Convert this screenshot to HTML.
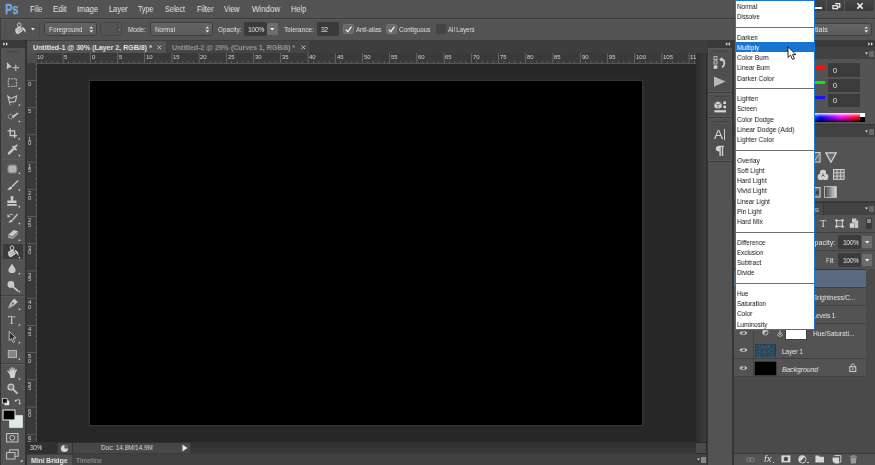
<!DOCTYPE html>
<html><head><meta charset="utf-8"><title>Photoshop</title>
<style>
html,body{margin:0;padding:0;}
body{width:875px;height:465px;position:relative;overflow:hidden;background:#535353;font-family:"Liberation Sans",sans-serif;}
body>div,body>svg{position:absolute;display:block;}
.r{white-space:nowrap;text-align:right;transform:rotate(-90deg);will-change:transform;}
.t{white-space:nowrap;transform-origin:0 50%;will-change:transform;}
</style></head><body>
<div style="left:27px;top:53px;width:681px;height:401px;background:#272727;"></div>
<div style="left:90px;top:81px;width:552.2px;height:344.3px;background:#000;outline:1px solid #343434;box-shadow:0 0 0 2px #2b2b2b;"></div>
<div style="left:27px;top:53px;width:669px;height:10px;background:#3a3a3a;"></div>
<div style="left:27px;top:53px;width:10px;height:389px;background:#3a3a3a;"></div>
<div style="left:27px;top:53px;width:10px;height:10px;background:#4d4d4d;"></div>
<svg style="left:27px;top:53px;" width="669" height="10" viewBox="0 0 669 10"><rect x="13.9" y="8" width="0.7" height="2" fill="#6c6c6c"/><rect x="19.3" y="8" width="0.7" height="2" fill="#6c6c6c"/><rect x="24.8" y="8" width="0.7" height="2" fill="#6c6c6c"/><rect x="30.2" y="8" width="0.7" height="2" fill="#6c6c6c"/><rect x="35.7" y="0" width="0.7" height="10" fill="#747474"/><rect x="41.1" y="8" width="0.7" height="2" fill="#6c6c6c"/><rect x="46.6" y="8" width="0.7" height="2" fill="#6c6c6c"/><rect x="52.0" y="8" width="0.7" height="2" fill="#6c6c6c"/><rect x="57.5" y="8" width="0.7" height="2" fill="#6c6c6c"/><rect x="62.9" y="0" width="0.7" height="10" fill="#747474"/><rect x="68.3" y="8" width="0.7" height="2" fill="#6c6c6c"/><rect x="73.8" y="8" width="0.7" height="2" fill="#6c6c6c"/><rect x="79.2" y="8" width="0.7" height="2" fill="#6c6c6c"/><rect x="84.7" y="8" width="0.7" height="2" fill="#6c6c6c"/><rect x="90.1" y="0" width="0.7" height="10" fill="#747474"/><rect x="95.6" y="8" width="0.7" height="2" fill="#6c6c6c"/><rect x="101.0" y="8" width="0.7" height="2" fill="#6c6c6c"/><rect x="106.5" y="8" width="0.7" height="2" fill="#6c6c6c"/><rect x="111.9" y="8" width="0.7" height="2" fill="#6c6c6c"/><rect x="117.3" y="0" width="0.7" height="10" fill="#747474"/><rect x="122.8" y="8" width="0.7" height="2" fill="#6c6c6c"/><rect x="128.2" y="8" width="0.7" height="2" fill="#6c6c6c"/><rect x="133.7" y="8" width="0.7" height="2" fill="#6c6c6c"/><rect x="139.1" y="8" width="0.7" height="2" fill="#6c6c6c"/><rect x="144.6" y="0" width="0.7" height="10" fill="#747474"/><rect x="150.0" y="8" width="0.7" height="2" fill="#6c6c6c"/><rect x="155.4" y="8" width="0.7" height="2" fill="#6c6c6c"/><rect x="160.9" y="8" width="0.7" height="2" fill="#6c6c6c"/><rect x="166.3" y="8" width="0.7" height="2" fill="#6c6c6c"/><rect x="171.8" y="0" width="0.7" height="10" fill="#747474"/><rect x="177.2" y="8" width="0.7" height="2" fill="#6c6c6c"/><rect x="182.7" y="8" width="0.7" height="2" fill="#6c6c6c"/><rect x="188.1" y="8" width="0.7" height="2" fill="#6c6c6c"/><rect x="193.6" y="8" width="0.7" height="2" fill="#6c6c6c"/><rect x="199.0" y="0" width="0.7" height="10" fill="#747474"/><rect x="204.4" y="8" width="0.7" height="2" fill="#6c6c6c"/><rect x="209.9" y="8" width="0.7" height="2" fill="#6c6c6c"/><rect x="215.3" y="8" width="0.7" height="2" fill="#6c6c6c"/><rect x="220.8" y="8" width="0.7" height="2" fill="#6c6c6c"/><rect x="226.2" y="0" width="0.7" height="10" fill="#747474"/><rect x="231.7" y="8" width="0.7" height="2" fill="#6c6c6c"/><rect x="237.1" y="8" width="0.7" height="2" fill="#6c6c6c"/><rect x="242.6" y="8" width="0.7" height="2" fill="#6c6c6c"/><rect x="248.0" y="8" width="0.7" height="2" fill="#6c6c6c"/><rect x="253.4" y="0" width="0.7" height="10" fill="#747474"/><rect x="258.9" y="8" width="0.7" height="2" fill="#6c6c6c"/><rect x="264.3" y="8" width="0.7" height="2" fill="#6c6c6c"/><rect x="269.8" y="8" width="0.7" height="2" fill="#6c6c6c"/><rect x="275.2" y="8" width="0.7" height="2" fill="#6c6c6c"/><rect x="280.7" y="0" width="0.7" height="10" fill="#747474"/><rect x="286.1" y="8" width="0.7" height="2" fill="#6c6c6c"/><rect x="291.5" y="8" width="0.7" height="2" fill="#6c6c6c"/><rect x="297.0" y="8" width="0.7" height="2" fill="#6c6c6c"/><rect x="302.4" y="8" width="0.7" height="2" fill="#6c6c6c"/><rect x="307.9" y="0" width="0.7" height="10" fill="#747474"/><rect x="313.3" y="8" width="0.7" height="2" fill="#6c6c6c"/><rect x="318.8" y="8" width="0.7" height="2" fill="#6c6c6c"/><rect x="324.2" y="8" width="0.7" height="2" fill="#6c6c6c"/><rect x="329.7" y="8" width="0.7" height="2" fill="#6c6c6c"/><rect x="335.1" y="0" width="0.7" height="10" fill="#747474"/><rect x="340.5" y="8" width="0.7" height="2" fill="#6c6c6c"/><rect x="346.0" y="8" width="0.7" height="2" fill="#6c6c6c"/><rect x="351.4" y="8" width="0.7" height="2" fill="#6c6c6c"/><rect x="356.9" y="8" width="0.7" height="2" fill="#6c6c6c"/><rect x="362.3" y="0" width="0.7" height="10" fill="#747474"/><rect x="367.8" y="8" width="0.7" height="2" fill="#6c6c6c"/><rect x="373.2" y="8" width="0.7" height="2" fill="#6c6c6c"/><rect x="378.7" y="8" width="0.7" height="2" fill="#6c6c6c"/><rect x="384.1" y="8" width="0.7" height="2" fill="#6c6c6c"/><rect x="389.5" y="0" width="0.7" height="10" fill="#747474"/><rect x="395.0" y="8" width="0.7" height="2" fill="#6c6c6c"/><rect x="400.4" y="8" width="0.7" height="2" fill="#6c6c6c"/><rect x="405.9" y="8" width="0.7" height="2" fill="#6c6c6c"/><rect x="411.3" y="8" width="0.7" height="2" fill="#6c6c6c"/><rect x="416.8" y="0" width="0.7" height="10" fill="#747474"/><rect x="422.2" y="8" width="0.7" height="2" fill="#6c6c6c"/><rect x="427.6" y="8" width="0.7" height="2" fill="#6c6c6c"/><rect x="433.1" y="8" width="0.7" height="2" fill="#6c6c6c"/><rect x="438.5" y="8" width="0.7" height="2" fill="#6c6c6c"/><rect x="444.0" y="0" width="0.7" height="10" fill="#747474"/><rect x="449.4" y="8" width="0.7" height="2" fill="#6c6c6c"/><rect x="454.9" y="8" width="0.7" height="2" fill="#6c6c6c"/><rect x="460.3" y="8" width="0.7" height="2" fill="#6c6c6c"/><rect x="465.8" y="8" width="0.7" height="2" fill="#6c6c6c"/><rect x="471.2" y="0" width="0.7" height="10" fill="#747474"/><rect x="476.6" y="8" width="0.7" height="2" fill="#6c6c6c"/><rect x="482.1" y="8" width="0.7" height="2" fill="#6c6c6c"/><rect x="487.5" y="8" width="0.7" height="2" fill="#6c6c6c"/><rect x="493.0" y="8" width="0.7" height="2" fill="#6c6c6c"/><rect x="498.4" y="0" width="0.7" height="10" fill="#747474"/><rect x="503.9" y="8" width="0.7" height="2" fill="#6c6c6c"/><rect x="509.3" y="8" width="0.7" height="2" fill="#6c6c6c"/><rect x="514.8" y="8" width="0.7" height="2" fill="#6c6c6c"/><rect x="520.2" y="8" width="0.7" height="2" fill="#6c6c6c"/><rect x="525.6" y="0" width="0.7" height="10" fill="#747474"/><rect x="531.1" y="8" width="0.7" height="2" fill="#6c6c6c"/><rect x="536.5" y="8" width="0.7" height="2" fill="#6c6c6c"/><rect x="542.0" y="8" width="0.7" height="2" fill="#6c6c6c"/><rect x="547.4" y="8" width="0.7" height="2" fill="#6c6c6c"/><rect x="552.9" y="0" width="0.7" height="10" fill="#747474"/><rect x="558.3" y="8" width="0.7" height="2" fill="#6c6c6c"/><rect x="563.7" y="8" width="0.7" height="2" fill="#6c6c6c"/><rect x="569.2" y="8" width="0.7" height="2" fill="#6c6c6c"/><rect x="574.6" y="8" width="0.7" height="2" fill="#6c6c6c"/><rect x="580.1" y="0" width="0.7" height="10" fill="#747474"/><rect x="585.5" y="8" width="0.7" height="2" fill="#6c6c6c"/><rect x="591.0" y="8" width="0.7" height="2" fill="#6c6c6c"/><rect x="596.4" y="8" width="0.7" height="2" fill="#6c6c6c"/><rect x="601.9" y="8" width="0.7" height="2" fill="#6c6c6c"/><rect x="607.3" y="0" width="0.7" height="10" fill="#747474"/><rect x="612.7" y="8" width="0.7" height="2" fill="#6c6c6c"/><rect x="618.2" y="8" width="0.7" height="2" fill="#6c6c6c"/><rect x="623.6" y="8" width="0.7" height="2" fill="#6c6c6c"/><rect x="629.1" y="8" width="0.7" height="2" fill="#6c6c6c"/><rect x="634.5" y="0" width="0.7" height="10" fill="#747474"/><rect x="640.0" y="8" width="0.7" height="2" fill="#6c6c6c"/><rect x="645.4" y="8" width="0.7" height="2" fill="#6c6c6c"/><rect x="650.9" y="8" width="0.7" height="2" fill="#6c6c6c"/><rect x="656.3" y="8" width="0.7" height="2" fill="#6c6c6c"/><rect x="661.7" y="0" width="0.7" height="10" fill="#747474"/><rect x="667.2" y="8" width="0.7" height="2" fill="#6c6c6c"/></svg>
<div class="t" style="left:37.16px;top:52.9px;height:8px;line-height:8px;font-size:6px;color:#d2d2d2;">10</div>
<div class="t" style="left:64.38px;top:52.9px;height:8px;line-height:8px;font-size:6px;color:#d2d2d2;">5</div>
<div class="t" style="left:91.6px;top:52.9px;height:8px;line-height:8px;font-size:6px;color:#d2d2d2;">0</div>
<div class="t" style="left:118.82px;top:52.9px;height:8px;line-height:8px;font-size:6px;color:#d2d2d2;">5</div>
<div class="t" style="left:146.04px;top:52.9px;height:8px;line-height:8px;font-size:6px;color:#d2d2d2;">10</div>
<div class="t" style="left:173.26px;top:52.9px;height:8px;line-height:8px;font-size:6px;color:#d2d2d2;">15</div>
<div class="t" style="left:200.48px;top:52.9px;height:8px;line-height:8px;font-size:6px;color:#d2d2d2;">20</div>
<div class="t" style="left:227.7px;top:52.9px;height:8px;line-height:8px;font-size:6px;color:#d2d2d2;">25</div>
<div class="t" style="left:254.92px;top:52.9px;height:8px;line-height:8px;font-size:6px;color:#d2d2d2;">30</div>
<div class="t" style="left:282.14px;top:52.9px;height:8px;line-height:8px;font-size:6px;color:#d2d2d2;">35</div>
<div class="t" style="left:309.36px;top:52.9px;height:8px;line-height:8px;font-size:6px;color:#d2d2d2;">40</div>
<div class="t" style="left:336.58px;top:52.9px;height:8px;line-height:8px;font-size:6px;color:#d2d2d2;">45</div>
<div class="t" style="left:363.8px;top:52.9px;height:8px;line-height:8px;font-size:6px;color:#d2d2d2;">50</div>
<div class="t" style="left:391.02px;top:52.9px;height:8px;line-height:8px;font-size:6px;color:#d2d2d2;">55</div>
<div class="t" style="left:418.24px;top:52.9px;height:8px;line-height:8px;font-size:6px;color:#d2d2d2;">60</div>
<div class="t" style="left:445.46px;top:52.9px;height:8px;line-height:8px;font-size:6px;color:#d2d2d2;">65</div>
<div class="t" style="left:472.68px;top:52.9px;height:8px;line-height:8px;font-size:6px;color:#d2d2d2;">70</div>
<div class="t" style="left:499.9px;top:52.9px;height:8px;line-height:8px;font-size:6px;color:#d2d2d2;">75</div>
<div class="t" style="left:527.12px;top:52.9px;height:8px;line-height:8px;font-size:6px;color:#d2d2d2;">80</div>
<div class="t" style="left:554.34px;top:52.9px;height:8px;line-height:8px;font-size:6px;color:#d2d2d2;">85</div>
<div class="t" style="left:581.56px;top:52.9px;height:8px;line-height:8px;font-size:6px;color:#d2d2d2;">90</div>
<div class="t" style="left:608.78px;top:52.9px;height:8px;line-height:8px;font-size:6px;color:#d2d2d2;">95</div>
<div class="t" style="left:636px;top:52.9px;height:8px;line-height:8px;font-size:6px;color:#d2d2d2;">100</div>
<div class="t" style="left:663.22px;top:52.9px;height:8px;line-height:8px;font-size:6px;color:#d2d2d2;">105</div>
<div class="t" style="left:690.44px;top:52.9px;height:8px;line-height:8px;font-size:6px;color:#d2d2d2;">110</div>
<svg style="left:27px;top:53px;" width="10" height="389" viewBox="0 0 10 389"><rect y="10.7" x="8" height="0.7" width="2" fill="#6c6c6c"/><rect y="16.1" x="8" height="0.7" width="2" fill="#6c6c6c"/><rect y="21.6" x="8" height="0.7" width="2" fill="#6c6c6c"/><rect y="27.0" x="0" height="0.8" width="10" fill="#666"/><rect y="32.4" x="8" height="0.7" width="2" fill="#6c6c6c"/><rect y="37.9" x="8" height="0.7" width="2" fill="#6c6c6c"/><rect y="43.3" x="8" height="0.7" width="2" fill="#6c6c6c"/><rect y="48.8" x="8" height="0.7" width="2" fill="#6c6c6c"/><rect y="54.2" x="0" height="0.8" width="10" fill="#666"/><rect y="59.7" x="8" height="0.7" width="2" fill="#6c6c6c"/><rect y="65.1" x="8" height="0.7" width="2" fill="#6c6c6c"/><rect y="70.6" x="8" height="0.7" width="2" fill="#6c6c6c"/><rect y="76.0" x="8" height="0.7" width="2" fill="#6c6c6c"/><rect y="81.4" x="0" height="0.8" width="10" fill="#666"/><rect y="86.9" x="8" height="0.7" width="2" fill="#6c6c6c"/><rect y="92.3" x="8" height="0.7" width="2" fill="#6c6c6c"/><rect y="97.8" x="8" height="0.7" width="2" fill="#6c6c6c"/><rect y="103.2" x="8" height="0.7" width="2" fill="#6c6c6c"/><rect y="108.7" x="0" height="0.8" width="10" fill="#666"/><rect y="114.1" x="8" height="0.7" width="2" fill="#6c6c6c"/><rect y="119.5" x="8" height="0.7" width="2" fill="#6c6c6c"/><rect y="125.0" x="8" height="0.7" width="2" fill="#6c6c6c"/><rect y="130.4" x="8" height="0.7" width="2" fill="#6c6c6c"/><rect y="135.9" x="0" height="0.8" width="10" fill="#666"/><rect y="141.3" x="8" height="0.7" width="2" fill="#6c6c6c"/><rect y="146.8" x="8" height="0.7" width="2" fill="#6c6c6c"/><rect y="152.2" x="8" height="0.7" width="2" fill="#6c6c6c"/><rect y="157.7" x="8" height="0.7" width="2" fill="#6c6c6c"/><rect y="163.1" x="0" height="0.8" width="10" fill="#666"/><rect y="168.5" x="8" height="0.7" width="2" fill="#6c6c6c"/><rect y="174.0" x="8" height="0.7" width="2" fill="#6c6c6c"/><rect y="179.4" x="8" height="0.7" width="2" fill="#6c6c6c"/><rect y="184.9" x="8" height="0.7" width="2" fill="#6c6c6c"/><rect y="190.3" x="0" height="0.8" width="10" fill="#666"/><rect y="195.8" x="8" height="0.7" width="2" fill="#6c6c6c"/><rect y="201.2" x="8" height="0.7" width="2" fill="#6c6c6c"/><rect y="206.7" x="8" height="0.7" width="2" fill="#6c6c6c"/><rect y="212.1" x="8" height="0.7" width="2" fill="#6c6c6c"/><rect y="217.5" x="0" height="0.8" width="10" fill="#666"/><rect y="223.0" x="8" height="0.7" width="2" fill="#6c6c6c"/><rect y="228.4" x="8" height="0.7" width="2" fill="#6c6c6c"/><rect y="233.9" x="8" height="0.7" width="2" fill="#6c6c6c"/><rect y="239.3" x="8" height="0.7" width="2" fill="#6c6c6c"/><rect y="244.8" x="0" height="0.8" width="10" fill="#666"/><rect y="250.2" x="8" height="0.7" width="2" fill="#6c6c6c"/><rect y="255.6" x="8" height="0.7" width="2" fill="#6c6c6c"/><rect y="261.1" x="8" height="0.7" width="2" fill="#6c6c6c"/><rect y="266.5" x="8" height="0.7" width="2" fill="#6c6c6c"/><rect y="272.0" x="0" height="0.8" width="10" fill="#666"/><rect y="277.4" x="8" height="0.7" width="2" fill="#6c6c6c"/><rect y="282.9" x="8" height="0.7" width="2" fill="#6c6c6c"/><rect y="288.3" x="8" height="0.7" width="2" fill="#6c6c6c"/><rect y="293.8" x="8" height="0.7" width="2" fill="#6c6c6c"/><rect y="299.2" x="0" height="0.8" width="10" fill="#666"/><rect y="304.6" x="8" height="0.7" width="2" fill="#6c6c6c"/><rect y="310.1" x="8" height="0.7" width="2" fill="#6c6c6c"/><rect y="315.5" x="8" height="0.7" width="2" fill="#6c6c6c"/><rect y="321.0" x="8" height="0.7" width="2" fill="#6c6c6c"/><rect y="326.4" x="0" height="0.8" width="10" fill="#666"/><rect y="331.9" x="8" height="0.7" width="2" fill="#6c6c6c"/><rect y="337.3" x="8" height="0.7" width="2" fill="#6c6c6c"/><rect y="342.8" x="8" height="0.7" width="2" fill="#6c6c6c"/><rect y="348.2" x="8" height="0.7" width="2" fill="#6c6c6c"/><rect y="353.6" x="0" height="0.8" width="10" fill="#666"/><rect y="359.1" x="8" height="0.7" width="2" fill="#6c6c6c"/><rect y="364.5" x="8" height="0.7" width="2" fill="#6c6c6c"/><rect y="370.0" x="8" height="0.7" width="2" fill="#6c6c6c"/><rect y="375.4" x="8" height="0.7" width="2" fill="#6c6c6c"/><rect y="380.9" x="0" height="0.8" width="10" fill="#666"/><rect y="386.3" x="8" height="0.7" width="2" fill="#6c6c6c"/></svg>
<div class="t" style="left:28.3px;top:81.2px;height:6px;line-height:6px;font-size:6px;color:#cecece;">0</div>
<div class="t" style="left:28.3px;top:108.42px;height:6px;line-height:6px;font-size:6px;color:#cecece;">5</div>
<div class="t" style="left:28.3px;top:135.64px;height:6px;line-height:6px;font-size:6px;color:#cecece;">1</div>
<div class="t" style="left:28.3px;top:140.24px;height:6px;line-height:6px;font-size:6px;color:#cecece;">0</div>
<div class="t" style="left:28.3px;top:162.86px;height:6px;line-height:6px;font-size:6px;color:#cecece;">1</div>
<div class="t" style="left:28.3px;top:167.46px;height:6px;line-height:6px;font-size:6px;color:#cecece;">5</div>
<div class="t" style="left:28.3px;top:190.08px;height:6px;line-height:6px;font-size:6px;color:#cecece;">2</div>
<div class="t" style="left:28.3px;top:194.68px;height:6px;line-height:6px;font-size:6px;color:#cecece;">0</div>
<div class="t" style="left:28.3px;top:217.3px;height:6px;line-height:6px;font-size:6px;color:#cecece;">2</div>
<div class="t" style="left:28.3px;top:221.9px;height:6px;line-height:6px;font-size:6px;color:#cecece;">5</div>
<div class="t" style="left:28.3px;top:244.52px;height:6px;line-height:6px;font-size:6px;color:#cecece;">3</div>
<div class="t" style="left:28.3px;top:249.12px;height:6px;line-height:6px;font-size:6px;color:#cecece;">0</div>
<div class="t" style="left:28.3px;top:271.74px;height:6px;line-height:6px;font-size:6px;color:#cecece;">3</div>
<div class="t" style="left:28.3px;top:276.34px;height:6px;line-height:6px;font-size:6px;color:#cecece;">5</div>
<div class="t" style="left:28.3px;top:298.96px;height:6px;line-height:6px;font-size:6px;color:#cecece;">4</div>
<div class="t" style="left:28.3px;top:303.56px;height:6px;line-height:6px;font-size:6px;color:#cecece;">0</div>
<div class="t" style="left:28.3px;top:326.18px;height:6px;line-height:6px;font-size:6px;color:#cecece;">4</div>
<div class="t" style="left:28.3px;top:330.78px;height:6px;line-height:6px;font-size:6px;color:#cecece;">5</div>
<div class="t" style="left:28.3px;top:353.4px;height:6px;line-height:6px;font-size:6px;color:#cecece;">5</div>
<div class="t" style="left:28.3px;top:358px;height:6px;line-height:6px;font-size:6px;color:#cecece;">0</div>
<div class="t" style="left:28.3px;top:380.62px;height:6px;line-height:6px;font-size:6px;color:#cecece;">5</div>
<div class="t" style="left:28.3px;top:385.22px;height:6px;line-height:6px;font-size:6px;color:#cecece;">5</div>
<div class="t" style="left:28.3px;top:407.84px;height:6px;line-height:6px;font-size:6px;color:#cecece;">6</div>
<div class="t" style="left:28.3px;top:412.44px;height:6px;line-height:6px;font-size:6px;color:#cecece;">0</div>
<div class="t" style="left:28.3px;top:435.06px;height:6px;line-height:6px;font-size:6px;color:#cecece;">6</div>
<div class="t" style="left:28.3px;top:439.66px;height:6px;line-height:6px;font-size:6px;color:#cecece;">5</div>
<div style="left:37px;top:62.8px;width:659px;height:0.8px;background:#565656;"></div>
<div style="left:36px;top:63px;width:0.8px;height:379px;background:#565656;"></div>
<div style="left:696px;top:53px;width:12px;height:401px;background:#2b2b2b;"></div>
<div style="left:696px;top:53px;width:9.8px;height:389px;background:linear-gradient(90deg,#2e2e2e,#3c3c3c);"></div>
<div style="left:696px;top:442.8px;width:9.8px;height:9.8px;background:#4b4b4b;"></div>
<div style="left:27px;top:442px;width:669px;height:12px;background:linear-gradient(#2e2e2e,#3b3b3b);"></div>
<div style="left:27px;top:442px;width:30px;height:12px;background:#303030;"></div>
<div style="left:57.5px;top:443px;width:14.5px;height:10px;background:#4a4a4a;"></div>
<div style="left:72.5px;top:443px;width:117.5px;height:10px;background:#474747;"></div>
<div class="t" style="left:30px;top:442.4px;height:12px;line-height:12px;font-size:7.2px;color:#e6e6e6;transform:scaleX(0.8327);">30%</div>
<div class="t" style="left:101px;top:442.4px;height:12px;line-height:12px;font-size:7.2px;color:#dedede;transform:scaleX(0.8839);">Doc: 14.8M/14.9M</div>
<svg style="left:182px;top:444px;" width="6" height="8" viewBox="0 0 6 8"><path d="M0.5 0.5 L5.5 4 L0.5 7.5Z" fill="#e8e8e8"/></svg>
<svg style="left:60px;top:443.5px;" width="9" height="9" viewBox="0 0 9 9"><circle cx="4.5" cy="4.5" r="3.6" fill="#d8d8d8"/><path d="M4.5 4.5 L4.5 1 A3.5 3.5 0 0 1 8 4.5Z" fill="#555"/></svg>
<div style="left:0px;top:453.6px;width:735px;height:11.4px;background:#404040;"></div>
<div style="left:27px;top:455px;width:44.5px;height:10px;background:#535353;"></div>
<div class="t" style="left:31px;top:454.9px;height:12px;line-height:12px;font-size:7.4px;color:#ececec;font-weight:bold;transform:scaleX(0.9060);">Mini Bridge</div>
<div class="t" style="left:76px;top:454.9px;height:12px;line-height:12px;font-size:7.4px;color:#8c8c8c;font-weight:bold;transform:scaleX(0.8700);">Timeline</div>
<svg style="left:697px;top:457px;" width="9" height="6" viewBox="0 0 9 6"><path d="M0 1.5h3L1.5 3.5Z M4 0.5h5v1h-5z M4 2.5h5v1h-5z M4 4.5h5v1h-5z" fill="#cfcfcf"/></svg>
<div style="left:0px;top:0px;width:875px;height:17.6px;background:#535353;"></div>
<div style="left:0px;top:17.6px;width:875px;height:1px;background:#3a3a3a;"></div>
<div class="t" style="left:5px;top:2.9px;height:12px;line-height:12px;font-size:14.4px;color:#72aae2;font-weight:bold;transform:scaleX(0.7721);-webkit-text-stroke:0.45px #72aae2;">Ps</div>
<div class="t" style="left:30.2px;top:3.4px;height:12px;line-height:12px;font-size:8.3px;color:#e8e8e8;transform:scaleX(0.9346);">File</div>
<div class="t" style="left:52.8px;top:3.4px;height:12px;line-height:12px;font-size:8.3px;color:#e8e8e8;transform:scaleX(0.9509);">Edit</div>
<div class="t" style="left:76.9px;top:3.4px;height:12px;line-height:12px;font-size:8.3px;color:#e8e8e8;transform:scaleX(0.9147);">Image</div>
<div class="t" style="left:108.6px;top:3.4px;height:12px;line-height:12px;font-size:8.3px;color:#e8e8e8;transform:scaleX(0.8958);">Layer</div>
<div class="t" style="left:137.8px;top:3.4px;height:12px;line-height:12px;font-size:8.3px;color:#e8e8e8;transform:scaleX(0.8614);">Type</div>
<div class="t" style="left:165.4px;top:3.4px;height:12px;line-height:12px;font-size:8.3px;color:#e8e8e8;transform:scaleX(0.8713);">Select</div>
<div class="t" style="left:197px;top:3.4px;height:12px;line-height:12px;font-size:8.3px;color:#e8e8e8;transform:scaleX(0.9054);">Filter</div>
<div class="t" style="left:224.2px;top:3.4px;height:12px;line-height:12px;font-size:8.3px;color:#e8e8e8;transform:scaleX(0.8744);">View</div>
<div class="t" style="left:251.9px;top:3.4px;height:12px;line-height:12px;font-size:8.3px;color:#e8e8e8;transform:scaleX(0.9519);">Window</div>
<div class="t" style="left:291px;top:3.4px;height:12px;line-height:12px;font-size:8.3px;color:#e8e8e8;transform:scaleX(0.8904);">Help</div>
<div style="left:808px;top:0px;width:66.4px;height:11.2px;background:linear-gradient(#444,#3b3b3b);"></div>
<div style="left:826.4px;top:0px;width:0.8px;height:11.2px;background:#565656;"></div>
<div style="left:844.2px;top:0px;width:0.8px;height:11.2px;background:#565656;"></div>
<div style="left:815px;top:6.6px;width:6.8px;height:2.1px;background:#f0f0f0;"></div>
<svg style="left:830.5px;top:2px;" width="11" height="8" viewBox="0 0 11 8"><path d="M4.2 1.7h4.6v3.4h-1.6" fill="none" stroke="#f0f0f0" stroke-width="1.2"/><rect x="1.9" y="3.7" width="4.6" height="3" fill="none" stroke="#f0f0f0" stroke-width="1.2"/></svg>
<svg style="left:855.5px;top:2.4px;" width="8" height="8" viewBox="0 0 8 8"><path d="M1.3 1.2l5.4 5.4M6.7 1.2L1.3 6.6" stroke="#f2f2f2" stroke-width="1.5" fill="none"/></svg>
<div style="left:0px;top:18.6px;width:875px;height:21.4px;background:#535353;"></div>
<div style="left:0px;top:18.6px;width:875px;height:0.8px;background:#5c5c5c;"></div>
<svg style="left:4px;top:22px;" width="3" height="14" viewBox="0 0 3 14"><rect x="0.5" y="0" width="1" height="1" fill="#454545"/><rect x="0.5" y="2" width="1" height="1" fill="#454545"/><rect x="0.5" y="4" width="1" height="1" fill="#454545"/><rect x="0.5" y="6" width="1" height="1" fill="#454545"/><rect x="0.5" y="8" width="1" height="1" fill="#454545"/><rect x="0.5" y="10" width="1" height="1" fill="#454545"/><rect x="0.5" y="12" width="1" height="1" fill="#454545"/></svg>
<svg style="left:13px;top:21px;" width="15" height="15" viewBox="0 0 15 15"><g transform="translate(1.9 1.4)"><ellipse cx="4.4" cy="2.7" rx="1.8" ry="2.3" fill="none" stroke="#d2d2d2" stroke-width="0.9"/><path d="M0.3 6.6L5 3.6L8.2 8.4L3.6 11.6Q1.2 12 0.6 9.6Z" fill="#d2d2d2"/><path d="M1.6 8.2L6.2 5.3M2.8 10L7.3 7.1" stroke="#777" stroke-width="0.7"/><path d="M6.6 4.6C9.6 5 11.2 7.4 10.6 10.6C9.6 9.4 9.4 8 8 7.2Z" fill="#e2e2e2"/></g></svg>
<svg style="left:31.4px;top:28.1px;" width="4" height="3" viewBox="0 0 4 3"><path d="M0 0h3.8L1.9 2.5Z" fill="#e6e6e6"/></svg>
<div style="left:39.2px;top:22px;width:0.7px;height:15px;background:#4a4a4a;"></div>
<div style="left:0px;top:18.6px;width:1px;height:21.4px;background:#3c3c3c;"></div>
<div style="left:45px;top:23.3px;width:51px;height:11.5px;background:linear-gradient(#646464,#5a5a5a);border-radius:2px;box-shadow:0 0 0 0.8px #3a3a3a;"></div>
<svg style="left:88.5px;top:25.9px;" width="5" height="7" viewBox="0 0 5 7"><path d="M0.4 2.6L2.3 0.4L4.2 2.6Z M0.4 4.2L2.3 6.4L4.2 4.2Z" fill="#ececec"/></svg>
<div class="t" style="left:49px;top:23.8px;height:12px;line-height:12px;font-size:7.2px;color:#e2e2e2;transform:scaleX(0.8919);">Foreground</div>
<div style="left:101px;top:23.3px;width:20px;height:11.5px;background:#535353;border-radius:2px;box-shadow:0 0 0 0.8px #464646;"></div>
<div style="left:116.5px;top:24px;width:0.7px;height:10px;background:#474747;"></div>
<svg style="left:117.6px;top:28.6px;" width="3" height="2" viewBox="0 0 3 2"><path d="M0 0h3L1.5 1.8Z" fill="#7a7a7a"/></svg>
<div class="t" style="left:128px;top:23.8px;height:12px;line-height:12px;font-size:7.2px;color:#e2e2e2;transform:scaleX(0.8795);">Mode:</div>
<div style="left:151px;top:23.3px;width:61px;height:11.5px;background:linear-gradient(#646464,#5a5a5a);border-radius:2px;box-shadow:0 0 0 0.8px #3a3a3a;"></div>
<svg style="left:204.5px;top:25.9px;" width="5" height="7" viewBox="0 0 5 7"><path d="M0.4 2.6L2.3 0.4L4.2 2.6Z M0.4 4.2L2.3 6.4L4.2 4.2Z" fill="#ececec"/></svg>
<div class="t" style="left:154.9px;top:23.8px;height:12px;line-height:12px;font-size:7.2px;color:#e2e2e2;transform:scaleX(0.8619);">Normal</div>
<div class="t" style="left:217.6px;top:23.8px;height:12px;line-height:12px;font-size:7.2px;color:#e2e2e2;transform:scaleX(0.8936);">Opacity:</div>
<div style="left:244.5px;top:23.3px;width:21.8px;height:11.3px;background:#3a3a3a;box-shadow:0 0 0 0.7px #333;"></div>
<div class="t" style="left:248.2px;top:23.8px;height:12px;line-height:12px;font-size:7.2px;color:#ededed;transform:scaleX(0.8906);">100%</div>
<div style="left:267px;top:23.3px;width:11px;height:11.3px;background:#6c6c6c;border-radius:1px;"></div>
<svg style="left:270.3px;top:28px;" width="5" height="3" viewBox="0 0 5 3"><path d="M0 0h4.4L2.2 2.6Z" fill="#f0f0f0"/></svg>
<div class="t" style="left:283.9px;top:23.8px;height:12px;line-height:12px;font-size:7.2px;color:#e2e2e2;transform:scaleX(0.8940);">Tolerance:</div>
<div style="left:318px;top:23.3px;width:20.3px;height:11.3px;background:#3a3a3a;box-shadow:0 0 0 0.7px #333;"></div>
<div class="t" style="left:321px;top:23.8px;height:12px;line-height:12px;font-size:7.2px;color:#ededed;transform:scaleX(0.8241);">32</div>
<div style="left:344.2px;top:25px;width:8.6px;height:8.4px;background:#676767;box-shadow:0 0 0 0.8px #7e7e7e;border-radius:1px;"></div>
<svg style="left:344.2px;top:24.5px;" width="9" height="9" viewBox="0 0 9 9"><path d="M1.8 4.6L3.8 6.8L7.4 1.6" fill="none" stroke="#f4f4f4" stroke-width="1.3"/></svg>
<div class="t" style="left:355.8px;top:23.8px;height:12px;line-height:12px;font-size:7.2px;color:#e2e2e2;transform:scaleX(0.8510);">Anti-alias</div>
<div style="left:387.2px;top:25px;width:8.6px;height:8.4px;background:#676767;box-shadow:0 0 0 0.8px #7e7e7e;border-radius:1px;"></div>
<svg style="left:387.2px;top:24.5px;" width="9" height="9" viewBox="0 0 9 9"><path d="M1.8 4.6L3.8 6.8L7.4 1.6" fill="none" stroke="#f4f4f4" stroke-width="1.3"/></svg>
<div class="t" style="left:398.9px;top:23.8px;height:12px;line-height:12px;font-size:7.2px;color:#e2e2e2;transform:scaleX(0.8648);">Contiguous</div>
<div style="left:437px;top:25px;width:8.4px;height:8.4px;background:#454545;box-shadow:0 0 0 0.8px #3c3c3c;border-radius:1px;"></div>
<div class="t" style="left:448.2px;top:23.8px;height:12px;line-height:12px;font-size:7.2px;color:#e2e2e2;transform:scaleX(0.8382);">All Layers</div>
<div style="left:790px;top:23.7px;width:81.4px;height:11.6px;background:linear-gradient(#646464,#5a5a5a);border-radius:2px;box-shadow:0 0 0 0.8px #3a3a3a;"></div>
<svg style="left:863.9px;top:26.3px;" width="5" height="7" viewBox="0 0 5 7"><path d="M0.4 2.6L2.3 0.4L4.2 2.6Z M0.4 4.2L2.3 6.4L4.2 4.2Z" fill="#ececec"/></svg>
<div class="t" style="left:794.5px;top:24.4px;height:12px;line-height:12px;font-size:7.2px;color:#e2e2e2;transform:scaleX(0.9965);">Essentials</div>
<div style="left:25px;top:40px;width:710px;height:13px;background:#3e3e3e;"></div>
<div style="left:166.6px;top:40.6px;width:143.8px;height:12.4px;background:#454545;"></div>
<div style="left:310.4px;top:40.6px;width:0.7px;height:12.4px;background:#353535;"></div>
<div style="left:27px;top:40.6px;width:139px;height:12.4px;background:#535353;"></div>
<div class="t" style="left:32.7px;top:41.8px;height:12px;line-height:12px;font-size:7.6px;color:#ececec;font-weight:bold;transform:scaleX(0.9275);">Untitled-1 @ 30% (Layer 2, RGB/8) *</div>
<svg style="left:157px;top:44.5px;" width="5" height="5" viewBox="0 0 5 5"><path d="M0.6 0.6l3.6 3.6M4.2 0.6L0.6 4.2" stroke="#d8d8d8" stroke-width="0.9"/></svg>
<div class="t" style="left:172.4px;top:41.8px;height:12px;line-height:12px;font-size:7.6px;color:#989898;font-weight:bold;transform:scaleX(0.9215);">Untitled-2 @ 29% (Curves 1, RGB/8) *</div>
<svg style="left:300.5px;top:44.5px;" width="5" height="5" viewBox="0 0 5 5"><path d="M0.6 0.6l3.6 3.6M4.2 0.6L0.6 4.2" stroke="#d0d0d0" stroke-width="0.9"/></svg>
<div style="left:0px;top:40px;width:27px;height:425px;background:#333;"></div>
<div style="left:0px;top:40px;width:25px;height:8px;background:#3a3a3a;"></div>
<div style="left:0.8px;top:48px;width:24.2px;height:417px;background:#535353;"></div>
<svg style="left:3px;top:42.3px;" width="6" height="4" viewBox="0 0 6 4"><path d="M0.3 0.3L2.3 2L0.3 3.7Z M3 0.3L5 2L3 3.7Z" fill="#e0e0e0"/></svg>
<div style="left:6px;top:51.3px;width:13px;height:1.1px;background:#444;"></div>
<div style="left:1px;top:158.5px;width:24px;height:0.9px;background:#424242;"></div>
<div style="left:1px;top:159.4px;width:24px;height:0.7px;background:#5c5c5c;"></div>
<div style="left:1px;top:294.7px;width:24px;height:0.9px;background:#424242;"></div>
<div style="left:1px;top:295.6px;width:24px;height:0.7px;background:#5c5c5c;"></div>
<div style="left:1px;top:362.8px;width:24px;height:0.9px;background:#424242;"></div>
<div style="left:1px;top:363.7px;width:24px;height:0.7px;background:#5c5c5c;"></div>
<div style="left:2.6px;top:244.4px;width:20.4px;height:14.8px;background:#3b3b3b;border-radius:1.5px;"></div>
<svg style="left:0px;top:48px;" width="25" height="360" viewBox="0 48 25 360"><path d="M6.9 62V69.4L8.9 67.6L12 67.2Z" fill="#cacaca"/><path d="M15.8 65.1v5.2M13.2 67.7h5.2" stroke="#d8d8d8" stroke-width="0.8"/><path d="M15.8 64.4l0.9 1.1h-1.8ZM15.8 71l0.9-1.1h-1.8ZM12.5 67.7l1.1-0.9v1.8ZM19.1 67.7l-1.1-0.9v1.8Z" fill="#d8d8d8"/><rect x="8.3" y="78.8" width="8.1" height="7.6" fill="none" stroke="#cacaca" stroke-width="1" stroke-dasharray="1.7 1.1"/><rect x="18.7" y="87.8" width="1.4" height="1.4" fill="#dedede"/><path d="M7.8 96.2L11 98.4L16.6 96L15.4 101.6L9.6 102.4Z" fill="none" stroke="#cacaca" stroke-width="1.1"/><path d="M9.6 102.4C9 103.6 9.8 104.4 10.8 105" fill="none" stroke="#cacaca" stroke-width="0.9"/><rect x="18.7" y="104.4" width="1.4" height="1.4" fill="#dedede"/><ellipse cx="10.6" cy="116.6" rx="2.5" ry="2.2" fill="none" stroke="#cacaca" stroke-width="0.9" stroke-dasharray="1.2 0.8"/><path d="M11.6 116.4L17.6 112.4L18.6 113.4L13.2 118Z" fill="#cacaca"/><rect x="18.7" y="120.8" width="1.4" height="1.4" fill="#dedede"/><path d="M10.2 128.4V135.6H17M7.6 130.8H14.6V138" fill="none" stroke="#cacaca" stroke-width="1.3"/><rect x="18.7" y="138.2" width="1.4" height="1.4" fill="#dedede"/><path d="M7.6 154.8L8.2 152.6L13 147.8L14.6 149.4L9.8 154.2Z" fill="#cacaca"/><path d="M13 146.6L16 149.6M14 147.8L16.6 145.4" stroke="#cacaca" stroke-width="1.8" stroke-linecap="round"/><rect x="18.7" y="154.8" width="1.4" height="1.4" fill="#dedede"/><rect x="8.2" y="165.2" width="8.4" height="7.6" rx="2" fill="#b4b4b4"/><rect x="7.7" y="164.7" width="9.4" height="8.6" rx="2.4" fill="none" stroke="#9a9a9a" stroke-width="0.9" stroke-dasharray="0.9 0.9"/><rect x="18.7" y="172.6" width="1.4" height="1.4" fill="#dedede"/><path d="M17.8 180L11.4 186.2L12.4 187.2L18.6 181Z" fill="#cacaca"/><path d="M10.8 186.6C9 186.8 9.2 188.8 7 189.6C9.8 190.4 12 189.4 12.2 187.8Z" fill="#cacaca"/><rect x="18.7" y="189.4" width="1.4" height="1.4" fill="#dedede"/><path d="M10.4 196.2h3.2l-0.6 4.4h3.4v2.4H7.4v-2.4h3.6Z" fill="#cacaca"/><rect x="7.2" y="204" width="9.6" height="1.8" fill="#cacaca"/><rect x="18.7" y="206" width="1.4" height="1.4" fill="#dedede"/><path d="M17.2 213.4L12 219.4L13 220.4L18 214.4Z" fill="#cacaca"/><path d="M11.4 219.8C9.6 220 9.8 221.6 8 222.4C10.6 223 12.6 222.2 12.8 220.8Z" fill="#cacaca"/><path d="M8 216.6C9 214 12 213.8 13.2 215.2" fill="none" stroke="#cacaca" stroke-width="1"/><path d="M7.2 214.6L7.8 217.6L10.4 216.4Z" fill="#cacaca"/><rect x="18.7" y="222.8" width="1.4" height="1.4" fill="#dedede"/><path d="M8 235L13.6 230L18.2 231.2L12.6 236.2Z" fill="#cacaca"/><path d="M8 235.6L12.6 236.9L18.2 231.9V234L12.6 239L8 237.7Z" fill="#a0a0a0"/><rect x="18.7" y="239.6" width="1.4" height="1.4" fill="#dedede"/><g transform="translate(7.7 245.3)"><ellipse cx="4.4" cy="2.7" rx="1.8" ry="2.3" fill="none" stroke="#d6d6d6" stroke-width="0.9"/><path d="M0.3 6.6L5 3.6L8.2 8.4L3.6 11.6Q1.2 12 0.6 9.6Z" fill="#d6d6d6"/><path d="M1.6 8.2L6.2 5.3M2.8 10L7.3 7.1" stroke="#777" stroke-width="0.7"/><path d="M6.6 4.6C9.6 5 11.2 7.4 10.6 10.6C9.6 9.4 9.4 8 8 7.2Z" fill="#e2e2e2"/></g><rect x="18.7" y="257" width="1.4" height="1.4" fill="#dedede"/><path d="M12 263.8C13.8 267 15.6 268.4 15.6 270.2A3.6 2.8 0 0 1 8.4 270.2C8.4 268.4 10.2 267 12 263.8Z" fill="#cacaca"/><rect x="18.7" y="273" width="1.4" height="1.4" fill="#dedede"/><circle cx="10.9" cy="284.4" r="3.4" fill="#cacaca"/><path d="M13.2 286.8L17.6 290.6" stroke="#cacaca" stroke-width="1.7" stroke-linecap="round"/><rect x="18.7" y="291" width="1.4" height="1.4" fill="#dedede"/><path d="M14.2 298.4L17.8 302L15 304.6C13.2 306.4 10.6 307.4 7.6 309C9 306 10 303.2 11.8 301.2Z" fill="#cacaca"/><circle cx="13" cy="303.4" r="1" fill="#535353"/><path d="M7.6 309L12.4 304.2" stroke="#535353" stroke-width="0.7"/><rect x="18.7" y="308.6" width="1.4" height="1.4" fill="#dedede"/><rect x="18.7" y="324.2" width="1.4" height="1.4" fill="#dedede"/><path d="M9.2 331.4V340.6L11.4 338.6L13 342.4L14.6 341.8L13 338H16Z" fill="#2a2a2a" stroke="#cacaca" stroke-width="0.9"/><rect x="18.7" y="342" width="1.4" height="1.4" fill="#dedede"/><rect x="8.3" y="350.4" width="8.2" height="7.2" fill="#868686" stroke="#bdbdbd" stroke-width="0.9"/><rect x="18.7" y="358.6" width="1.4" height="1.4" fill="#dedede"/><path d="M9.2 373.4L7.4 371.6C6.8 370.8 7.8 370 8.6 370.8L10 372.2L9.4 369C9.2 368 10.4 367.8 10.6 368.8L11.2 371L11.4 367.8C11.4 366.8 12.6 366.8 12.6 367.8L12.8 371L13.6 368.2C13.8 367.2 15 367.6 14.8 368.6L14.2 371.6L15.8 369.6C16.4 368.8 17.4 369.6 16.8 370.4L15.4 373.2C15.2 375.4 14.8 376.8 14.4 378H10.4C10.2 376.4 9.8 374.8 9.2 373.4Z" fill="#d2d2d2"/><rect x="18.7" y="378.4" width="1.4" height="1.4" fill="#dedede"/><circle cx="10.9" cy="387" r="2.9" fill="#787878" stroke="#cacaca" stroke-width="1.2"/><path d="M13.2 389.4L17 393.2" stroke="#cacaca" stroke-width="1.8" stroke-linecap="round"/></svg>
<div class="t" style="left:7.6px;top:313.2px;height:14px;line-height:14px;font-size:12px;color:#cfcfcf;font-family:'Liberation Serif',serif;">T</div>
<svg style="left:2px;top:398px;" width="8" height="8" viewBox="0 0 8 8"><rect x="2.6" y="2.6" width="4.6" height="4.6" fill="#eee"/><rect x="0.5" y="0.5" width="4.6" height="4.6" fill="#111" stroke="#ddd" stroke-width="0.7"/></svg>
<svg style="left:14px;top:398px;" width="8" height="8" viewBox="0 0 8 8"><path d="M1.6 3.6C1.8 1.8 3.6 1.6 5.6 1.8M5.6 1.8V5.6" fill="none" stroke="#d0d0d0" stroke-width="0.9"/><path d="M0.2 3.2h2.8L1.6 1.4ZM4.2 5h2.8L5.6 6.8Z" fill="#d0d0d0"/></svg>
<div style="left:9.6px;top:416px;width:12.2px;height:11.2px;background:#dcebea;box-shadow:0 0 0 0.8px #efefef;"></div>
<div style="left:4.3px;top:410.6px;width:9.3px;height:8.8px;background:#000;box-shadow:0 0 0 0.5px #222, 0 0 0 1.5px #e4e4e4;"></div>
<svg style="left:5.5px;top:433px;" width="13" height="10" viewBox="0 0 13 10"><rect x="0.6" y="0.6" width="11.4" height="8.4" fill="#585858" stroke="#d2d2d2" stroke-width="0.9"/><circle cx="6.3" cy="4.8" r="2.4" fill="#4a4a4a" stroke="#d2d2d2" stroke-width="0.9"/></svg>
<svg style="left:5.5px;top:449px;" width="18" height="14" viewBox="0 0 18 14"><rect x="3.6" y="0.8" width="8.6" height="6.4" fill="#5a5a5a" stroke="#cfcfcf" stroke-width="0.9"/><rect x="0.6" y="3.6" width="8.4" height="6.4" fill="#565656" stroke="#cfcfcf" stroke-width="0.9"/><path d="M16.6 10.4v2.4h-2.4Z" fill="#e4e4e4"/></svg>
<div style="left:707px;top:40px;width:28.6px;height:425px;background:#353535;"></div>
<div style="left:707px;top:40px;width:27px;height:7.5px;background:#3a3a3a;"></div>
<div style="left:708.1px;top:48px;width:23.6px;height:417px;background:#535353;"></div>
<svg style="left:725px;top:42px;" width="6" height="4" viewBox="0 0 6 4"><path d="M2.3 0.3L0.3 2L2.3 3.7Z M5 0.3L3 2L5 3.7Z" fill="#e0e0e0"/></svg>
<div style="left:708.1px;top:48px;width:23.6px;height:44px;background:#4f4f4f;box-shadow:inset 0 0 0 0.7px #5d5d5d;"></div>
<div style="left:708.1px;top:92px;width:23.6px;height:1px;background:#3b3b3b;"></div>
<div style="left:714px;top:50.6px;width:13px;height:1px;background:#424242;"></div>
<div style="left:708.1px;top:93px;width:23.6px;height:24.4px;background:#4f4f4f;box-shadow:inset 0 0 0 0.7px #5d5d5d;"></div>
<div style="left:708.1px;top:117.4px;width:23.6px;height:1px;background:#3b3b3b;"></div>
<div style="left:714px;top:95.6px;width:13px;height:1px;background:#424242;"></div>
<div style="left:708.1px;top:118.4px;width:23.6px;height:42.6px;background:#4f4f4f;box-shadow:inset 0 0 0 0.7px #5d5d5d;"></div>
<div style="left:708.1px;top:161px;width:23.6px;height:1px;background:#3b3b3b;"></div>
<div style="left:714px;top:121px;width:13px;height:1px;background:#424242;"></div>
<svg style="left:713px;top:56px;" width="16" height="14" viewBox="0 0 16 14"><rect x="1" y="0.6" width="3" height="3" fill="none" stroke="#d4d4d4" stroke-width="0.8"/><rect x="1" y="5" width="3" height="3" fill="none" stroke="#d4d4d4" stroke-width="0.8"/><rect x="0.7" y="9.4" width="3.6" height="3.4" fill="#d4d4d4"/><path d="M8 3.4C12 2.6 12.6 8.4 9 11.4" fill="none" stroke="#d4d4d4" stroke-width="1.6"/><path d="M6 3.6L9.4 1V6Z" fill="#d4d4d4"/></svg>
<svg style="left:713px;top:75.5px;" width="14" height="12" viewBox="0 0 14 12"><path d="M1 0.6L12.6 5.6L1 10.8Z" fill="#b9b9b9"/></svg>
<svg style="left:713px;top:100px;" width="16" height="13" viewBox="0 0 16 13"><path d="M1.4 3.2L5 1.4L8.6 3.2V7.2L5 9L1.4 7.2Z" fill="#d8d8d8"/><path d="M1.4 3.2L5 5L8.6 3.2M5 5V9" fill="none" stroke="#555" stroke-width="0.8"/><rect x="10.4" y="1.4" width="2.6" height="2.6" fill="#d8d8d8"/><rect x="10.4" y="5.6" width="2.6" height="2.6" fill="#d8d8d8"/><rect x="1.4" y="10.2" width="11.6" height="2.2" fill="#d8d8d8"/></svg>
<div class="t" style="left:713.6px;top:128.8px;height:12px;line-height:12px;font-size:12.5px;color:#d8d8d8;transform:scaleX(1.0794);">A</div>
<div style="left:724.4px;top:128.6px;width:0.9px;height:11.8px;background:#cfcfcf;"></div>
<svg style="left:714px;top:145px;" width="12" height="12" viewBox="0 0 12 12"><path d="M5.2 0.8H10V2H9.2V11H7.8V2H6.8V11H5.4V6.6C0.6 6.6 0.6 0.8 5.2 0.8Z" fill="#cfcfcf"/></svg>
<div style="left:733.8px;top:40px;width:141.2px;height:425px;background:#535353;"></div>
<div style="left:733.8px;top:40px;width:141.2px;height:7.3px;background:#3a3a3a;"></div>
<svg style="left:867.5px;top:42px;" width="6" height="4" viewBox="0 0 6 4"><path d="M0.3 0.3L2.3 2L0.3 3.7Z M3 0.3L5 2L3 3.7Z" fill="#e0e0e0"/></svg>
<div style="left:733.8px;top:47.3px;width:141.2px;height:11.7px;background:#424242;"></div>
<svg style="left:864.6px;top:50.6px;" width="9" height="6" viewBox="0 0 9 6"><path d="M0 1.5h3L1.5 3.5Z" fill="#e6e6e6"/><path d="M4 0.4h5v1.1h-5z M4 2.4h5v1.1h-5z M4 4.4h5v1.1h-5z" fill="#8f8f8f"/></svg>
<div style="left:812px;top:65.8px;width:12.8px;height:2.8px;background:#ff1010;"></div>
<div style="left:829.3px;top:64.3px;width:29.3px;height:11.3px;background:#3b3b3b;box-shadow:0 0 0 0.7px #343434;"></div>
<div class="t" style="left:833px;top:64.8px;height:12px;line-height:12px;font-size:7.2px;color:#eaeaea;transform:scaleX(0.8990);">0</div>
<div style="left:812px;top:81px;width:12.8px;height:2.8px;background:#12e612;"></div>
<div style="left:829.3px;top:79.5px;width:29.3px;height:11.3px;background:#3b3b3b;box-shadow:0 0 0 0.7px #343434;"></div>
<div class="t" style="left:833px;top:80px;height:12px;line-height:12px;font-size:7.2px;color:#eaeaea;transform:scaleX(0.8990);">0</div>
<div style="left:812px;top:96.2px;width:12.8px;height:2.8px;background:#1616f4;"></div>
<div style="left:829.3px;top:94.7px;width:29.3px;height:11.3px;background:#3b3b3b;box-shadow:0 0 0 0.7px #343434;"></div>
<div class="t" style="left:833px;top:95.2px;height:12px;line-height:12px;font-size:7.2px;color:#eaeaea;transform:scaleX(0.8990);">0</div>
<div style="left:744px;top:112.5px;width:115.5px;height:9.6px;background:linear-gradient(rgba(255,255,255,.9),rgba(255,255,255,0) 45%,rgba(0,0,0,0) 55%,rgba(0,0,0,.95)),linear-gradient(90deg,#f00 0%,#ff0 17%,#0f0 33%,#0ff 50%,#00f 66%,#f0f 83%,#f00 100%);"></div>
<div style="left:859.5px;top:112.5px;width:5.3px;height:4.8px;background:#fff;"></div>
<div style="left:859.5px;top:117.3px;width:5.3px;height:4.8px;background:#000;"></div>
<div style="left:733.8px;top:123.6px;width:141.2px;height:1.8px;background:#383838;"></div>
<div style="left:733.8px;top:125.4px;width:141.2px;height:11.6px;background:#424242;"></div>
<svg style="left:864.6px;top:128.6px;" width="9" height="6" viewBox="0 0 9 6"><path d="M0 1.5h3L1.5 3.5Z" fill="#e6e6e6"/><path d="M4 0.4h5v1.1h-5z M4 2.4h5v1.1h-5z M4 4.4h5v1.1h-5z" fill="#8f8f8f"/></svg>
<svg style="left:824.6px;top:151.6px;" width="12" height="11" viewBox="0 0 12 11"><path d="M0.8 0.8H11.2L6 10.2Z" fill="#6a6a6a" stroke="#d2d2d2" stroke-width="1.3"/></svg>
<svg style="left:813px;top:152px;" width="8" height="11" viewBox="0 0 8 11"><rect x="0.5" y="0.5" width="6.6" height="9.6" fill="#6e6e6e" stroke="#d2d2d2" stroke-width="1"/><path d="M1 9.6L6.8 1" stroke="#d2d2d2" stroke-width="0.8"/></svg>
<svg style="left:816.6px;top:168.6px;" width="12" height="12" viewBox="0 0 12 12"><circle cx="6" cy="3.9" r="3.1" fill="#d2d2d2"/><circle cx="3.7" cy="7.9" r="3.1" fill="#d2d2d2"/><circle cx="8.3" cy="7.9" r="3.1" fill="#d2d2d2"/><path d="M6 6.2V4.4M6 6.2L4.4 7.4M6 6.2L7.6 7.4" stroke="#555" stroke-width="0.9"/></svg>
<svg style="left:832.6px;top:169px;" width="12" height="11" viewBox="0 0 12 11"><rect x="0.5" y="0.5" width="10.6" height="9.8" fill="#6c6c6c" stroke="#d2d2d2" stroke-width="1"/><path d="M4.1 0.5V10.3M7.7 0.5V10.3M0.5 3.8H11.1M0.5 7.1H11.1" stroke="#d2d2d2" stroke-width="0.9"/></svg>
<svg style="left:813px;top:187px;" width="8" height="11" viewBox="0 0 8 11"><rect x="0.5" y="0.5" width="6.6" height="9.6" fill="#707070" stroke="#d2d2d2" stroke-width="1"/><path d="M5.6 2.4V8.6L2 5.5Z" fill="#3a3a3a"/></svg>
<div style="left:825px;top:187.4px;width:10.6px;height:9.6px;background:linear-gradient(90deg,#4a4a4a,#d6d6d6);box-shadow:0 0 0 0.8px #cfcfcf;"></div>
<div style="left:733.8px;top:201.4px;width:141.2px;height:1.8px;background:#383838;"></div>
<div style="left:733.8px;top:203.2px;width:141.2px;height:11.6px;background:#424242;"></div>
<div style="left:790px;top:203.6px;width:33px;height:11.2px;background:#4a4a4a;"></div>
<div style="left:823px;top:203.6px;width:0.8px;height:11.2px;background:#333;"></div>
<div class="t" style="left:790px;top:204px;height:12px;line-height:12px;font-size:7.4px;color:#a0a0a0;font-weight:bold;transform:scaleX(1.4639);">Paths</div>
<svg style="left:864.6px;top:206.4px;" width="9" height="6" viewBox="0 0 9 6"><path d="M0 1.5h3L1.5 3.5Z" fill="#e6e6e6"/><path d="M4 0.4h5v1.1h-5z M4 2.4h5v1.1h-5z M4 4.4h5v1.1h-5z" fill="#8f8f8f"/></svg>
<div class="t" style="left:820.2px;top:216.5px;height:13px;line-height:13px;font-size:10.4px;color:#d6d6d6;font-family:'Liberation Serif',serif;">T</div>
<svg style="left:834.8px;top:218.8px;" width="9" height="9" viewBox="0 0 9.4 9.4"><rect x="1.6" y="1.6" width="6.2" height="6.2" fill="#6a6a6a" stroke="#d0d0d0" stroke-width="0.9"/><rect x="0.3" y="0.3" width="2.2" height="2.2" fill="#d8d8d8"/><rect x="6.9" y="0.3" width="2.2" height="2.2" fill="#d8d8d8"/><rect x="0.3" y="6.9" width="2.2" height="2.2" fill="#d8d8d8"/><rect x="6.9" y="6.9" width="2.2" height="2.2" fill="#d8d8d8"/></svg>
<svg style="left:849px;top:217.6px;" width="10" height="11" viewBox="0 0 10 11"><path d="M3 0.6H7L9.2 2.8V10H3Z" fill="#c8c8c8"/><path d="M7 0.6V2.8H9.2" fill="#777"/><rect x="0.6" y="5" width="4.6" height="5" fill="#d8d8d8" stroke="#555" stroke-width="0.5"/></svg>
<div style="left:866.2px;top:218.2px;width:5.4px;height:10.8px;background:#3a3a3a;border-radius:1px;"></div>
<div style="left:867px;top:219px;width:3.8px;height:4.4px;background:#8a8a8a;"></div>
<div style="left:733.8px;top:232px;width:141.2px;height:1px;background:#404040;"></div>
<div class="t" style="left:808.6px;top:236.6px;height:12px;line-height:12px;font-size:7.2px;color:#e2e2e2;transform:scaleX(0.9996);">Opacity:</div>
<div style="left:839px;top:236px;width:21.2px;height:11.6px;background:#3b3b3b;box-shadow:0 0 0 0.7px #343434;"></div>
<div class="t" style="left:842.6px;top:236.6px;height:12px;line-height:12px;font-size:7.2px;color:#ededed;transform:scaleX(0.8580);">100%</div>
<div style="left:861.6px;top:236px;width:10.8px;height:11.6px;background:#6c6c6c;border-radius:1px;"></div>
<svg style="left:864.8px;top:240.8px;" width="5" height="3" viewBox="0 0 5 3"><path d="M0 0h4.4L2.2 2.6Z" fill="#f0f0f0"/></svg>
<div style="left:733.8px;top:250.4px;width:141.2px;height:0.9px;background:#404040;"></div>
<div class="t" style="left:826.4px;top:254.8px;height:12px;line-height:12px;font-size:7.2px;color:#e2e2e2;transform:scaleX(0.7680);">Fill:</div>
<div style="left:839px;top:254.2px;width:21.2px;height:11.6px;background:#3b3b3b;box-shadow:0 0 0 0.7px #343434;"></div>
<div class="t" style="left:842.6px;top:254.8px;height:12px;line-height:12px;font-size:7.2px;color:#ededed;transform:scaleX(0.8580);">100%</div>
<div style="left:861.6px;top:254.2px;width:10.8px;height:11.6px;background:#6c6c6c;border-radius:1px;"></div>
<svg style="left:864.8px;top:259px;" width="5" height="3" viewBox="0 0 5 3"><path d="M0 0h4.4L2.2 2.6Z" fill="#f0f0f0"/></svg>
<div style="left:733.8px;top:269.4px;width:141.2px;height:184.6px;background:#4a4a4a;"></div>
<div style="left:733.8px;top:269.4px;width:132.5px;height:0.8px;background:#3a3a3a;"></div>
<div style="left:733.8px;top:270.2px;width:132.5px;height:17px;background:#5b6880;"></div>
<div style="left:733.8px;top:287.2px;width:132.5px;height:0.8px;background:#404040;"></div>
<div style="left:752.6px;top:270.2px;width:0.8px;height:17px;background:#4c576c;"></div>
<svg style="left:738.8px;top:276.1px;" width="9" height="6" viewBox="0 0 9 6"><path d="M0.4 3C2.2 0.2 6.6 0.2 8.4 3C6.6 5.6 2.2 5.6 0.4 3Z" fill="#cdcdcd"/><circle cx="4.4" cy="2.8" r="1.6" fill="#484848"/><circle cx="3.9" cy="2.3" r="0.6" fill="#ddd"/></svg>
<div style="left:733.8px;top:288px;width:132.5px;height:17px;background:#535353;"></div>
<div style="left:733.8px;top:305px;width:132.5px;height:0.8px;background:#404040;"></div>
<div style="left:752.6px;top:288px;width:0.8px;height:17px;background:#454545;"></div>
<svg style="left:738.8px;top:293.9px;" width="9" height="6" viewBox="0 0 9 6"><path d="M0.4 3C2.2 0.2 6.6 0.2 8.4 3C6.6 5.6 2.2 5.6 0.4 3Z" fill="#cdcdcd"/><circle cx="4.4" cy="2.8" r="1.6" fill="#484848"/><circle cx="3.9" cy="2.3" r="0.6" fill="#ddd"/></svg>
<svg style="left:761.8px;top:293.7px;" width="7" height="7" viewBox="0 0 7 7"><circle cx="3.3" cy="3.3" r="2.7" fill="#585858" stroke="#c4c4c4" stroke-width="0.9"/><path d="M1.4 5.2A2.7 2.7 0 0 1 5.2 1.4Z" fill="#c4c4c4"/></svg>
<svg style="left:777.4px;top:292.5px;" width="6" height="9" viewBox="0 0 6 9"><path d="M3 0.6V6.4M1 4.6L3 6.8L5 4.6" fill="none" stroke="#d2d2d2" stroke-width="0.9"/><path d="M0.6 6.4C0.6 9 5.4 9 5.4 6.4" fill="none" stroke="#d2d2d2" stroke-width="0.8"/></svg>
<div style="left:785.8px;top:289.9px;width:20.2px;height:13.4px;background:#fff;box-shadow:0 0 0 0.7px #3c3c3c;"></div>
<div class="t" style="left:812.8px;top:292.3px;height:12px;line-height:12px;font-size:7.4px;color:#e8e8e8;transform:scaleX(0.8696);">Brightness/C...</div>
<div style="left:733.8px;top:305.8px;width:132.5px;height:17px;background:#535353;"></div>
<div style="left:733.8px;top:322.8px;width:132.5px;height:0.8px;background:#404040;"></div>
<div style="left:752.6px;top:305.8px;width:0.8px;height:17px;background:#454545;"></div>
<svg style="left:738.8px;top:311.7px;" width="9" height="6" viewBox="0 0 9 6"><path d="M0.4 3C2.2 0.2 6.6 0.2 8.4 3C6.6 5.6 2.2 5.6 0.4 3Z" fill="#cdcdcd"/><circle cx="4.4" cy="2.8" r="1.6" fill="#484848"/><circle cx="3.9" cy="2.3" r="0.6" fill="#ddd"/></svg>
<svg style="left:761.8px;top:311.5px;" width="7" height="7" viewBox="0 0 7 7"><circle cx="3.3" cy="3.3" r="2.7" fill="#585858" stroke="#c4c4c4" stroke-width="0.9"/><path d="M1.4 5.2A2.7 2.7 0 0 1 5.2 1.4Z" fill="#c4c4c4"/></svg>
<svg style="left:777.4px;top:310.3px;" width="6" height="9" viewBox="0 0 6 9"><path d="M3 0.6V6.4M1 4.6L3 6.8L5 4.6" fill="none" stroke="#d2d2d2" stroke-width="0.9"/><path d="M0.6 6.4C0.6 9 5.4 9 5.4 6.4" fill="none" stroke="#d2d2d2" stroke-width="0.8"/></svg>
<div style="left:785.8px;top:307.7px;width:20.2px;height:13.4px;background:#fff;box-shadow:0 0 0 0.7px #3c3c3c;"></div>
<div class="t" style="left:812.8px;top:310.1px;height:12px;line-height:12px;font-size:7.4px;color:#e8e8e8;transform:scaleX(0.8054);">Levels 1</div>
<div style="left:733.8px;top:323.6px;width:132.5px;height:17px;background:#535353;"></div>
<div style="left:733.8px;top:340.6px;width:132.5px;height:0.8px;background:#404040;"></div>
<div style="left:752.6px;top:323.6px;width:0.8px;height:17px;background:#454545;"></div>
<svg style="left:738.8px;top:329.5px;" width="9" height="6" viewBox="0 0 9 6"><path d="M0.4 3C2.2 0.2 6.6 0.2 8.4 3C6.6 5.6 2.2 5.6 0.4 3Z" fill="#cdcdcd"/><circle cx="4.4" cy="2.8" r="1.6" fill="#484848"/><circle cx="3.9" cy="2.3" r="0.6" fill="#ddd"/></svg>
<svg style="left:761.8px;top:329.3px;" width="7" height="7" viewBox="0 0 7 7"><circle cx="3.3" cy="3.3" r="2.7" fill="#585858" stroke="#c4c4c4" stroke-width="0.9"/><path d="M1.4 5.2A2.7 2.7 0 0 1 5.2 1.4Z" fill="#c4c4c4"/></svg>
<svg style="left:777.4px;top:328.1px;" width="6" height="9" viewBox="0 0 6 9"><path d="M3 0.6V6.4M1 4.6L3 6.8L5 4.6" fill="none" stroke="#d2d2d2" stroke-width="0.9"/><path d="M0.6 6.4C0.6 9 5.4 9 5.4 6.4" fill="none" stroke="#d2d2d2" stroke-width="0.8"/></svg>
<div style="left:785.8px;top:325.5px;width:20.2px;height:13.4px;background:#fff;box-shadow:0 0 0 0.7px #3c3c3c;"></div>
<div class="t" style="left:812.8px;top:327.9px;height:12px;line-height:12px;font-size:7.4px;color:#e8e8e8;transform:scaleX(0.8710);">Hue/Saturati...</div>
<div style="left:733.8px;top:341.4px;width:132.5px;height:17px;background:#535353;"></div>
<div style="left:733.8px;top:358.4px;width:132.5px;height:0.8px;background:#404040;"></div>
<div style="left:752.6px;top:341.4px;width:0.8px;height:17px;background:#454545;"></div>
<svg style="left:738.8px;top:347.3px;" width="9" height="6" viewBox="0 0 9 6"><path d="M0.4 3C2.2 0.2 6.6 0.2 8.4 3C6.6 5.6 2.2 5.6 0.4 3Z" fill="#cdcdcd"/><circle cx="4.4" cy="2.8" r="1.6" fill="#484848"/><circle cx="3.9" cy="2.3" r="0.6" fill="#ddd"/></svg>
<svg style="left:755.4px;top:343.5px;" width="20.6" height="13.8" viewBox="0 0 20.6 13.8"><defs><filter id="nz" x="0" y="0" width="100%%" height="100%%"><feTurbulence type="fractalNoise" baseFrequency="0.55 0.9" numOctaves="2" seed="7"/><feColorMatrix type="matrix" values="0 0 0 0 0.17  0 0 0 0 0.30  0 0 0 0 0.38  1.6 0 0 0 -0.55"/></filter></defs><rect width="20.6" height="13.8" fill="#233f52"/><rect width="20.6" height="13.8" fill="#9fc0cf" filter="url(#nz)" opacity="0.6"/><rect width="20.6" height="13.8" fill="none" stroke="#2e2e2e" stroke-width="0.8"/></svg>
<div class="t" style="left:782.4px;top:345.7px;height:12px;line-height:12px;font-size:7.4px;color:#ececec;transform:scaleX(0.8508);">Layer 1</div>
<div style="left:733.8px;top:359.2px;width:132.5px;height:17px;background:#535353;"></div>
<div style="left:733.8px;top:376.2px;width:132.5px;height:0.8px;background:#404040;"></div>
<div style="left:752.6px;top:359.2px;width:0.8px;height:17px;background:#454545;"></div>
<svg style="left:738.8px;top:365.1px;" width="9" height="6" viewBox="0 0 9 6"><path d="M0.4 3C2.2 0.2 6.6 0.2 8.4 3C6.6 5.6 2.2 5.6 0.4 3Z" fill="#cdcdcd"/><circle cx="4.4" cy="2.8" r="1.6" fill="#484848"/><circle cx="3.9" cy="2.3" r="0.6" fill="#ddd"/></svg>
<div style="left:755.4px;top:361.5px;width:20.6px;height:13.2px;background:#000;box-shadow:0 0 0 0.7px #333;"></div>
<div class="t" style="left:782.4px;top:363.5px;height:12px;line-height:12px;font-size:7.4px;color:#ececec;font-style:italic;transform:scaleX(0.9166);">Background</div>
<svg style="left:848.6px;top:363.1px;" width="8" height="9" viewBox="0 0 8 9"><rect x="0.8" y="3.8" width="6" height="4.6" fill="none" stroke="#d8d8d8" stroke-width="1"/><path d="M2.2 3.8V2.4C2.2 0.4 5.4 0.4 5.4 2.4V3.8" fill="none" stroke="#d8d8d8" stroke-width="0.9"/><rect x="3.3" y="5.2" width="1" height="1.8" fill="#d8d8d8"/></svg>
<div style="left:733.8px;top:453.4px;width:141.2px;height:0.8px;background:#3a3a3a;"></div>
<div style="left:733.8px;top:454.2px;width:141.2px;height:10.8px;background:#535353;"></div>
<svg style="left:746px;top:456.6px;" width="9" height="6" viewBox="0 0 9 6"><rect x="0.5" y="0.8" width="4.4" height="3.6" rx="1.8" fill="none" stroke="#8a8a8a" stroke-width="0.9"/><rect x="3.8" y="0.8" width="4.4" height="3.6" rx="1.8" fill="none" stroke="#8a8a8a" stroke-width="0.9"/></svg>
<div class="t" style="left:764.4px;top:453.4px;height:12px;line-height:12px;font-size:8.6px;color:#dcdcdc;font-style:italic;transform:scaleX(1.1362);">fx</div>
<div style="left:772.6px;top:462px;width:1.2px;height:1.2px;background:#ddd;"></div>
<svg style="left:780.6px;top:455.4px;" width="10" height="8" viewBox="0 0 10 8"><rect x="0.4" y="0.4" width="9" height="7" fill="#d6d6d6"/><circle cx="4.9" cy="3.9" r="2.2" fill="#4a4a4a"/></svg>
<svg style="left:797.6px;top:455px;" width="9" height="9" viewBox="0 0 9 9"><circle cx="4.3" cy="4.3" r="3.7" fill="#555" stroke="#d8d8d8" stroke-width="0.9"/><path d="M1.7 6.9A3.7 3.7 0 0 1 6.9 1.7Z" fill="#d8d8d8"/></svg>
<div style="left:807.4px;top:462px;width:1.2px;height:1.2px;background:#ddd;"></div>
<svg style="left:814.6px;top:455.4px;" width="10" height="8" viewBox="0 0 10 8"><path d="M0.4 0.6H3.6L4.6 1.8H9V7.4H0.4Z" fill="#d6d6d6"/></svg>
<svg style="left:832px;top:455px;" width="10" height="9" viewBox="0 0 10 9"><path d="M2.4 0.6H8.8V7H7.4" fill="none" stroke="#cfcfcf" stroke-width="1"/><path d="M0.6 2.4H7V8.6H3L0.6 6.2Z" fill="#d6d6d6"/></svg>
<svg style="left:848.6px;top:455px;" width="9" height="9" viewBox="0 0 9 9"><path d="M1.4 2.6H7.4L6.8 8.6H2Z" fill="#9a9a9a"/><path d="M0.8 1.8H8M3.2 1.6V0.6H5.6V1.6" fill="none" stroke="#9a9a9a" stroke-width="0.9"/></svg>
<div style="left:735.4px;top:0px;width:79.4px;height:329.8px;background:#fff;box-shadow:inset 0 0 0 1px #1d78d2;"></div>
<div class="t" style="left:737.2px;top:0.8px;height:12px;line-height:12px;font-size:7.3px;color:#111;transform:scaleX(0.8586);">Normal</div>
<div class="t" style="left:737.2px;top:11.05px;height:12px;line-height:12px;font-size:7.3px;color:#111;transform:scaleX(0.8265);">Dissolve</div>
<div style="left:736.4px;top:26.6px;width:77.2px;height:1px;background:#6e6e6e;"></div>
<div class="t" style="left:737.2px;top:31.55px;height:12px;line-height:12px;font-size:7.3px;color:#111;transform:scaleX(0.8839);">Darken</div>
<div style="left:736.4px;top:42.4px;width:77.2px;height:9.4px;background:#1874d1;"></div>
<div class="t" style="left:737.2px;top:41.8px;height:12px;line-height:12px;font-size:7.3px;color:#fff;transform:scaleX(0.8971);">Multiply</div>
<div class="t" style="left:737.2px;top:52.05px;height:12px;line-height:12px;font-size:7.3px;color:#111;transform:scaleX(0.9113);">Color Burn</div>
<div class="t" style="left:737.2px;top:62.3px;height:12px;line-height:12px;font-size:7.3px;color:#111;transform:scaleX(0.8691);">Linear Burn</div>
<div class="t" style="left:737.2px;top:72.55px;height:12px;line-height:12px;font-size:7.3px;color:#111;transform:scaleX(0.8990);">Darker Color</div>
<div style="left:736.4px;top:88.1px;width:77.2px;height:1px;background:#6e6e6e;"></div>
<div class="t" style="left:737.2px;top:93.05px;height:12px;line-height:12px;font-size:7.3px;color:#111;transform:scaleX(0.8893);">Lighten</div>
<div class="t" style="left:737.2px;top:103.3px;height:12px;line-height:12px;font-size:7.3px;color:#111;transform:scaleX(0.8560);">Screen</div>
<div class="t" style="left:737.2px;top:113.55px;height:12px;line-height:12px;font-size:7.3px;color:#111;transform:scaleX(0.8979);">Color Dodge</div>
<div class="t" style="left:737.2px;top:123.8px;height:12px;line-height:12px;font-size:7.3px;color:#111;transform:scaleX(0.8993);">Linear Dodge (Add)</div>
<div class="t" style="left:737.2px;top:134.05px;height:12px;line-height:12px;font-size:7.3px;color:#111;transform:scaleX(0.8901);">Lighter Color</div>
<div style="left:736.4px;top:149.6px;width:77.2px;height:1px;background:#6e6e6e;"></div>
<div class="t" style="left:737.2px;top:154.55px;height:12px;line-height:12px;font-size:7.3px;color:#111;transform:scaleX(0.9065);">Overlay</div>
<div class="t" style="left:737.2px;top:164.8px;height:12px;line-height:12px;font-size:7.3px;color:#111;transform:scaleX(0.8884);">Soft Light</div>
<div class="t" style="left:737.2px;top:175.05px;height:12px;line-height:12px;font-size:7.3px;color:#111;transform:scaleX(0.8848);">Hard Light</div>
<div class="t" style="left:737.2px;top:185.3px;height:12px;line-height:12px;font-size:7.3px;color:#111;transform:scaleX(0.8882);">Vivid Light</div>
<div class="t" style="left:737.2px;top:195.55px;height:12px;line-height:12px;font-size:7.3px;color:#111;transform:scaleX(0.8597);">Linear Light</div>
<div class="t" style="left:737.2px;top:205.8px;height:12px;line-height:12px;font-size:7.3px;color:#111;transform:scaleX(0.8659);">Pin Light</div>
<div class="t" style="left:737.2px;top:216.05px;height:12px;line-height:12px;font-size:7.3px;color:#111;transform:scaleX(0.8834);">Hard Mix</div>
<div style="left:736.4px;top:231.6px;width:77.2px;height:1px;background:#6e6e6e;"></div>
<div class="t" style="left:737.2px;top:236.55px;height:12px;line-height:12px;font-size:7.3px;color:#111;transform:scaleX(0.8600);">Difference</div>
<div class="t" style="left:737.2px;top:246.8px;height:12px;line-height:12px;font-size:7.3px;color:#111;transform:scaleX(0.8418);">Exclusion</div>
<div class="t" style="left:737.2px;top:257.05px;height:12px;line-height:12px;font-size:7.3px;color:#111;transform:scaleX(0.8865);">Subtract</div>
<div class="t" style="left:737.2px;top:267.3px;height:12px;line-height:12px;font-size:7.3px;color:#111;transform:scaleX(0.8577);">Divide</div>
<div style="left:736.4px;top:282.85px;width:77.2px;height:1px;background:#6e6e6e;"></div>
<div class="t" style="left:737.2px;top:287.8px;height:12px;line-height:12px;font-size:7.3px;color:#111;transform:scaleX(0.8363);">Hue</div>
<div class="t" style="left:737.2px;top:298.05px;height:12px;line-height:12px;font-size:7.3px;color:#111;transform:scaleX(0.8654);">Saturation</div>
<div class="t" style="left:737.2px;top:308.3px;height:12px;line-height:12px;font-size:7.3px;color:#111;transform:scaleX(0.8828);">Color</div>
<div class="t" style="left:737.2px;top:318.55px;height:12px;line-height:12px;font-size:7.3px;color:#111;transform:scaleX(0.8655);">Luminosity</div>
<svg style="left:786.6px;top:46px;" width="11" height="15" viewBox="0 0 11 15"><path d="M1 0.8V11.4L3.6 9.2L5.4 13.4L7.4 12.6L5.6 8.6H9Z" fill="#fff" stroke="#111" stroke-width="0.9"/></svg>
</body></html>
